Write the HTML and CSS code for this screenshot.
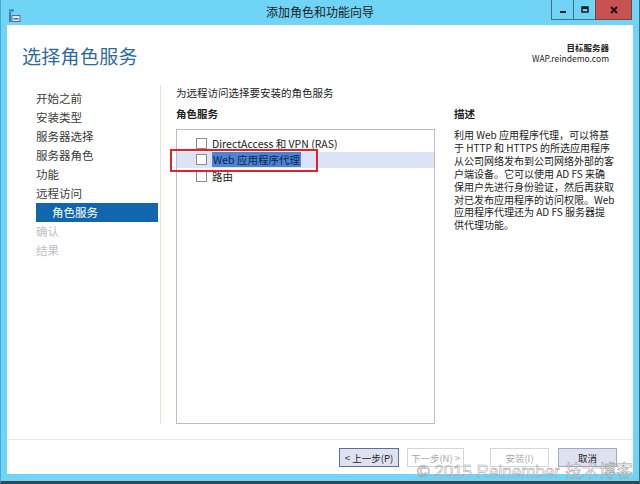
FILE: index.html
```html
<!DOCTYPE html>
<html lang="zh-CN">
<head>
    <meta charset="UTF-8">
    <title>添加角色和功能向导</title>
    <link rel="stylesheet" href="styles.css">
</head>
<body>
    <div class="window">
        <div class="titlebar">
            <div class="app-icon">
                <svg width="13" height="14" viewBox="0 0 13 14">
                    <rect x="1" y="0.5" width="5" height="2" fill="#3a7bc8"/>
                    <rect x="1" y="3" width="2" height="10" fill="#3a7bc8"/>
                    <rect x="3.5" y="6" width="9" height="7" fill="#5e6b78"/>
                    <rect x="4.5" y="7" width="7" height="5" fill="#dfe7ee"/>
                    <rect x="5.5" y="9" width="5" height="1.5" fill="#5e6b78"/>
                </svg>
            </div>
            <div class="title">添加角色和功能向导</div>
            <div class="caption-buttons">
                <div class="cap-btn">
                    <svg width="10" height="10" viewBox="0 0 10 10"><rect x="2" y="6" width="6" height="2" fill="#1a1a1a"/></svg>
                </div>
                <div class="cap-btn">
                    <svg width="10" height="10" viewBox="0 0 10 10"><rect x="2" y="2" width="6" height="5" fill="none" stroke="#1a1a1a" stroke-width="1.5"/><rect x="2" y="2" width="6" height="2" fill="#1a1a1a"/></svg>
                </div>
                <div class="cap-btn close">
                    <svg width="10" height="10" viewBox="0 0 10 10"><path d="M2 2 L8 8 M8 2 L2 8" stroke="#2a1010" stroke-width="2"/></svg>
                </div>
            </div>
        </div>

        <div class="client">
            <div class="header">
                <h1>选择角色服务</h1>
                <div class="target">
                    <div class="target-label">目标服务器</div>
                    <div>WAP.reindemo.com</div>
                </div>
            </div>

            <div class="body">
                <ul class="nav">
                    <li>开始之前</li>
                    <li>安装类型</li>
                    <li>服务器选择</li>
                    <li>服务器角色</li>
                    <li>功能</li>
                    <li>远程访问</li>
                    <li class="current">角色服务</li>
                    <li class="disabled">确认</li>
                    <li class="disabled">结果</li>
                </ul>

                <div class="main">
                    <p class="intro">为远程访问选择要安装的角色服务</p>
                    <div class="columns">
                        <div class="roles">
                            <h3>角色服务</h3>
                            <div class="listbox">
                                <div class="item">
                                    <span class="check"></span>
                                    <span>DirectAccess 和 VPN (RAS)</span>
                                </div>
                                <div class="item selected">
                                    <span class="check"></span>
                                    <span class="sel-text">Web 应用程序代理</span>
                                </div>
                                <div class="item">
                                    <span class="check"></span>
                                    <span>路由</span>
                                </div>
                                <div class="marker"></div>
                            </div>
                        </div>
                        <div class="desc">
                            <h3>描述</h3>
                            <p>利用 Web 应用程序代理，可以将基<br>于 HTTP 和 HTTPS 的所选应用程序<br>从公司网络发布到公司网络外部的客<br>户端设备。它可以使用 AD FS 来确<br>保用户先进行身份验证，然后再获取<br>对已发布应用程序的访问权限。Web<br>应用程序代理还为 AD FS 服务器提<br>供代理功能。</p>
                        </div>
                    </div>
                </div>
            </div>

            <div class="footer">
                <button class="btn focus">&lt; 上一步(P)</button>
                <button class="btn off next">下一步(N) &gt;</button>
                <button class="btn off install">安装(I)</button>
                <button class="btn cancel">取消</button>
            </div>
        </div>

        <div class="watermark">© 2015 Reinember 技术博客</div>
    </div>
</body>
</html>
```

FILE: styles.css
```css
* {
    box-sizing: border-box;
}

body {
    margin: 0;
    font-family: "Noto Sans CJK SC", "Noto Sans", sans-serif;
    background: #2b3640;
}

.window {
    position: relative;
    width: 640px;
    height: 484px;
    background: #6fd4f6;
    border-left: 1px solid #4aa7cf;
    border-right: 1px solid #3d6a80;
    border-bottom: 3px solid #3a4650;
    display: flex;
    flex-direction: column;
}

/* title bar */
.titlebar {
    height: 25px;
    display: grid;
    grid-template-columns: 1fr auto 1fr;
    align-items: start;
}

.app-icon {
    padding: 4px 0 0 7px;
}

.title {
    font-size: 12px;
    line-height: 24px;
    color: #1b1b1b;
}

.caption-buttons {
    justify-self: end;
    display: flex;
    margin-right: 7px;
    height: 20px;
}

.cap-btn {
    width: 22px;
    height: 20px;
    border: 1px solid #3e6f86;
    border-top: none;
    border-right: none;
    display: flex;
    align-items: center;
    justify-content: center;
}

.cap-btn.close {
    width: 37px;
    background: #c75252;
    border-color: #8a3a3a;
    border-right: 1px solid #8a3a3a;
}

/* client area */
.client {
    flex: 1;
    margin: 0 6px 7px 6px;
    background: #fff;
    display: flex;
    flex-direction: column;
}

.header {
    height: 60px;
    display: flex;
    justify-content: space-between;
    padding: 0 24px 0 15px;
}

.header h1 {
    margin: 17px 0 0;
    font-size: 19px;
    font-weight: normal;
    color: #2f6a9c;
    letter-spacing: 0.3px;
}

.target {
    margin-top: 17px;
    text-align: right;
    font-size: 8.5px;
    line-height: 11px;
    color: #1e1e1e;
}

.target-label {
    font-weight: bold;
}

.body {
    flex: 1;
    display: flex;
}

.nav {
    list-style: none;
    margin: 0 0 15px;
    padding: 4px 0 0 29px;
    width: 154px;
    border-right: 1px solid #e6e3da;
}

.nav li {
    height: 19px;
    line-height: 19px;
    font-size: 11.5px;
    color: #3a3a3a;
}

.nav li.current {
    background: #1266ad;
    color: #fff;
    padding-left: 16px;
    margin-right: 2px;
}

.nav li.disabled {
    color: #bcc0c6;
}

.main {
    flex: 1;
    padding: 0 0 15px 15px;
    display: flex;
    flex-direction: column;
}

.intro {
    margin: 0;
    height: 22px;
    line-height: 14px;
    padding-top: 1px;
    font-size: 10.5px;
    color: #222;
}

.columns {
    flex: 1;
    display: flex;
    gap: 19px;
}

h3 {
    margin: 0;
    height: 22px;
    font-size: 10.5px;
    line-height: 14px;
    color: #222;
}

.roles {
    width: 259px;
    display: flex;
    flex-direction: column;
}

.listbox {
    position: relative;
    flex: 1;
    border: 1px solid #bdbdbd;
    padding-top: 5px;
}

.item {
    height: 16.5px;
    display: flex;
    align-items: center;
    gap: 5px;
    padding-left: 19px;
    font-size: 10.5px;
    color: #222;
}

.item.selected {
    background: #dde3f6;
}

.check {
    width: 11px;
    height: 11px;
    border: 1px solid #8c8c8c;
    background: #fff;
}

.sel-text {
    background: #4b84d4;
    color: #10244a;
    padding: 0 1px;
}

.marker {
    position: absolute;
    left: -7px;
    top: 19px;
    width: 148px;
    height: 23px;
    border: 2px solid #e3222b;
}

.desc {
    flex: 1;
}

.desc p {
    margin: 0;
    font-size: 10px;
    line-height: 12.9px;
    color: #222;
    white-space: nowrap;
}

/* footer */
.footer {
    height: 35px;
    border-top: 1px solid #e7e9ef;
    display: flex;
    justify-content: flex-end;
    padding: 8px 16px 0 0;
}

.btn {
    height: 19px;
    width: 59px;
    margin-left: 8px;
    padding: 0;
    font-family: inherit;
    font-size: 9.5px;
    color: #222;
    background: #dfe1f1;
    border: 1px solid #a3a9c0;
}

.btn.focus {
    width: 60px;
    border-color: #5c6e9a;
}

.btn.off {
    background: #fff;
    color: #a8a8a8;
    border-color: #d6d6d6;
}

.btn.next {
    width: 57px;
}

.btn.install {
    margin-left: 26px;
}

.btn.cancel {
    margin-left: 9px;
}

.watermark {
    position: absolute;
    left: 416px;
    top: 457px;
    font-family: "Liberation Sans", sans-serif;
    font-size: 17px;
    color: rgba(255, 255, 255, 0.35);
    -webkit-text-stroke: 0.5px #9c9c9c;
    white-space: nowrap;
}
```
